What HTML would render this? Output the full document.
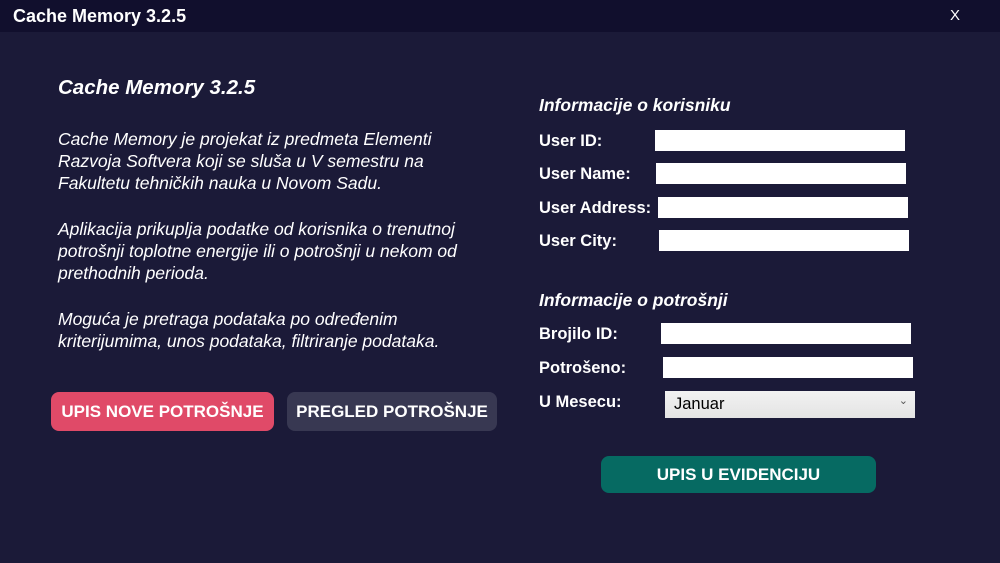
<!DOCTYPE html>
<html><head><meta charset="utf-8"><style>
*{margin:0;padding:0;box-sizing:border-box}
body{width:1000px;height:563px;background:#1b1a38;font-family:"Liberation Sans",sans-serif;color:#fff;position:relative;overflow:hidden}
.t{position:absolute;white-space:nowrap}
.bar{position:absolute;left:0;top:0;width:1000px;height:32px;background:#110f2d}
.in{position:absolute;background:#fff;width:250px;height:21px}
.lbl{position:absolute;font-size:16.5px;font-weight:bold;white-space:nowrap}
.p{font-size:17.5px;font-style:italic;line-height:22px}
.btn{position:absolute;border-radius:8px;font-weight:bold;font-size:17px;display:flex;align-items:center;justify-content:center;white-space:nowrap}
</style></head><body>
<div class="bar"></div>
<div class="t" style="left:13px;top:6px;font-size:18px;font-weight:bold">Cache Memory 3.2.5</div>
<div class="t" style="left:950px;top:7px;font-size:15px">X</div>
<div class="t" style="left:58px;top:76px;font-size:20.5px;font-weight:bold;font-style:italic">Cache Memory 3.2.5</div>
<div class="t p" style="left:58px;top:128px">Cache Memory je projekat iz predmeta Elementi<br>Razvoja Softvera koji se sluša u V semestru na<br>Fakultetu tehničkih nauka u Novom Sadu.</div>
<div class="t p" style="left:58px;top:218px">Aplikacija prikuplja podatke od korisnika o trenutnoj<br>potrošnji toplotne energije ili o potrošnji u nekom od<br>prethodnih perioda.</div>
<div class="t p" style="left:58px;top:308px">Moguća je pretraga podataka po određenim<br>kriterijumima, unos podataka, filtriranje podataka.</div>
<div class="btn" style="left:51px;top:392px;width:223px;height:39px;background:#e04a68">UPIS NOVE POTROŠNJE</div>
<div class="btn" style="left:287px;top:392px;width:210px;height:39px;background:#383852">PREGLED POTROŠNJE</div>
<div class="t" style="left:539px;top:95px;font-size:17.5px;font-weight:bold;font-style:italic">Informacije o korisniku</div>
<div class="lbl" style="left:539px;top:132px">User ID:</div><div class="in" style="left:655px;top:130px"></div>
<div class="lbl" style="left:539px;top:165px">User Name:</div><div class="in" style="left:656px;top:163px"></div>
<div class="lbl" style="left:539px;top:199px">User Address:</div><div class="in" style="left:658px;top:197px"></div>
<div class="lbl" style="left:539px;top:232px">User City:</div><div class="in" style="left:659px;top:230px"></div>
<div class="t" style="left:539px;top:290px;font-size:17.5px;font-weight:bold;font-style:italic">Informacije o potrošnji</div>
<div class="lbl" style="left:539px;top:325px">Brojilo ID:</div><div class="in" style="left:661px;top:323px"></div>
<div class="lbl" style="left:539px;top:359px">Potrošeno:</div><div class="in" style="left:663px;top:357px"></div>
<div class="lbl" style="left:539px;top:393px">U Mesecu:</div>
<div style="position:absolute;left:665px;top:391px;width:250px;height:27px;background:linear-gradient(#f2f2f2,#e4e4e4);color:#000;font-size:16.5px;padding:4px 0 0 9px">Januar<span style="position:absolute;right:7px;top:3px;font-size:11px;color:#555">&#8964;</span></div>
<div class="btn" style="left:601px;top:456px;width:275px;height:37px;background:#066a62">UPIS U EVIDENCIJU</div>
</body></html>
